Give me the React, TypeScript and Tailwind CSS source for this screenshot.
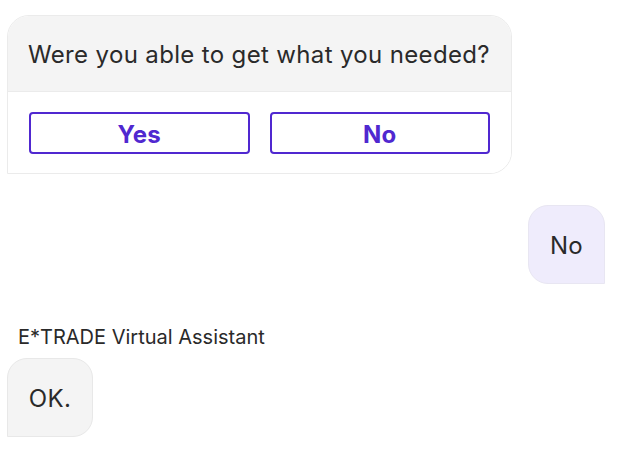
import React from "react";

const purple = "border-[#5028d0] text-[#5028d0]";

function ChoiceButton({ label }: { label: string }) {
  return (
    <button
      className={`flex-1 h-[42px] pt-[3px] rounded-[4px] border-2 ${purple} bg-white text-[24px] font-bold leading-none`}
    >
      {label}
    </button>
  );
}

export default function App() {
  return (
    <div
      className="w-[621px] h-[464px] bg-white text-[#2a2a2a] overflow-hidden tracking-[0.35px]"
      style={{ fontFamily: "Inter, 'Noto Sans', sans-serif" }}
    >
      <div className="flex flex-col pl-[7px] pr-[16px] pt-[15px]">
        <div className="w-[505px] rounded-t-[22px] rounded-br-[22px] border border-[#ebebeb] overflow-hidden">
          <div className="bg-[#f4f4f4] h-[76px] flex items-center pl-[20px] pt-[2px] text-[24px] border-b border-[#ebebeb]">
            Were you able to get what you needed?
          </div>
          <div className="bg-white flex gap-[20px] px-[21px] pt-[20px] pb-[19px]">
            <ChoiceButton label="Yes" />
            <ChoiceButton label="No" />
          </div>
        </div>

        <div className="flex justify-end mt-[31px]">
          <div className="w-[77px] h-[79px] pt-[3px] flex items-center justify-center rounded-t-[20px] rounded-bl-[20px] bg-[#efecfc] border border-[#e8e6f2] text-[24px]">
            No
          </div>
        </div>

        <div className="mt-[40px] pl-[11px] text-[20px] leading-[26px] tracking-normal">E*TRADE Virtual Assistant</div>

        <div className="mt-[8px] w-[86px] h-[79px] pt-[3px] flex items-center justify-center rounded-t-[20px] rounded-br-[20px] bg-[#f4f4f4] border border-[#e8e8e8] text-[24px]">
          OK.
        </div>
      </div>
    </div>
  );
}
